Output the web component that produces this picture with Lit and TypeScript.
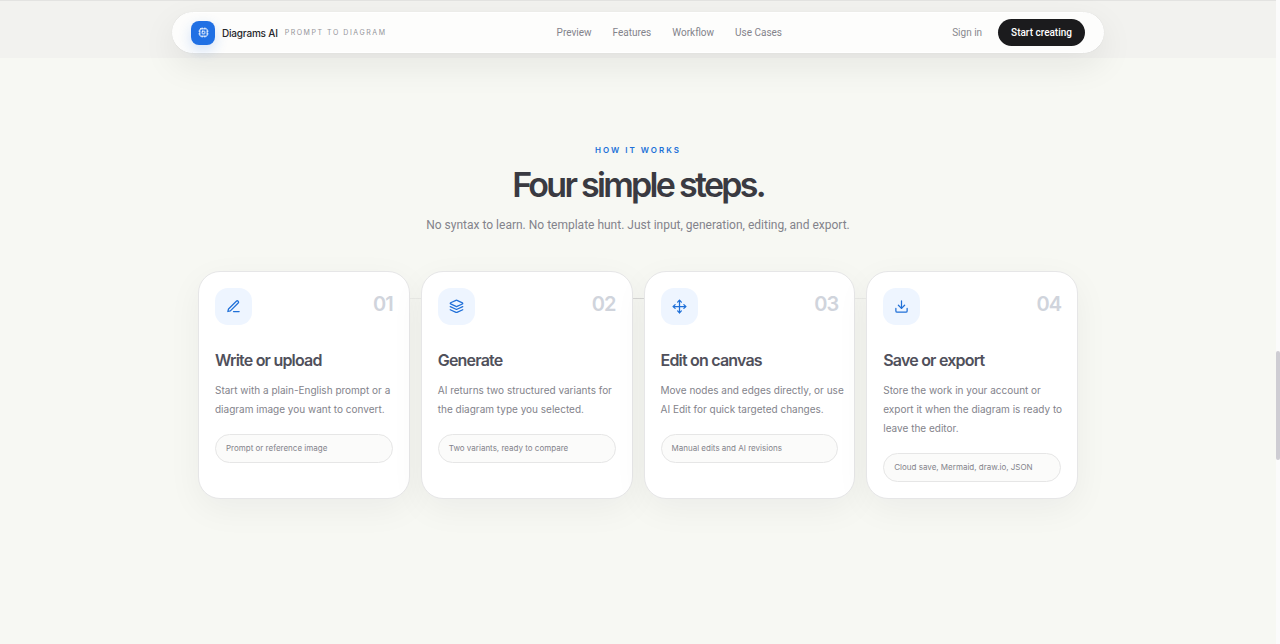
import { LitElement, html, svg, css, type SVGTemplateResult } from "lit";
import { customElement, property } from "lit/decorators.js";

type IconName = "pen" | "layers" | "move" | "download" | "cpu";

const ICONS: Record<IconName, SVGTemplateResult> = {
  pen: svg`<path d="M12 20h9"/><path d="M16.5 3.5a2.12 2.12 0 0 1 3 3L7 19l-4 1 1-4Z"/>`,
  layers: svg`<path d="m12.83 2.18a2 2 0 0 0-1.66 0L2.6 6.08a1 1 0 0 0 0 1.83l8.58 3.91a2 2 0 0 0 1.66 0l8.58-3.9a1 1 0 0 0 0-1.83Z"/><path d="m22 12.18-9.17 4.16a2 2 0 0 1-1.66 0L2 12.18"/><path d="m22 17.18-9.17 4.16a2 2 0 0 1-1.66 0L2 17.18"/>`,
  move: svg`<path d="M12 2v20M2 12h20"/><path d="m5 9-3 3 3 3"/><path d="m9 5 3-3 3 3"/><path d="m15 19-3 3-3-3"/><path d="m19 9 3 3-3 3"/>`,
  download: svg`<path d="M21 15v4a2 2 0 0 1-2 2H5a2 2 0 0 1-2-2v-4"/><path d="m7 10 5 5 5-5"/><path d="M12 15V3"/>`,
  cpu: svg`<rect x="4" y="4" width="16" height="16" rx="2"/><rect x="9" y="9" width="6" height="6" rx="1"/><path d="M15 2v2M15 20v2M2 15h2M2 9h2M20 15h2M20 9h2M9 2v2M9 20v2"/>`,
};

const icon = (name: IconName) => html`
  <svg class="icon" viewBox="0 0 24 24" aria-hidden="true">${ICONS[name]}</svg>
`;

const STEPS: { icon: IconName; title: string; text: string; note: string }[] = [
  {
    icon: "pen",
    title: "Write or upload",
    text: "Start with a plain-English prompt or a diagram image you want to convert.",
    note: "Prompt or reference image",
  },
  {
    icon: "layers",
    title: "Generate",
    text: "AI returns two structured variants for the diagram type you selected.",
    note: "Two variants, ready to compare",
  },
  {
    icon: "move",
    title: "Edit on canvas",
    text: "Move nodes and edges directly, or use AI Edit for quick targeted changes.",
    note: "Manual edits and AI revisions",
  },
  {
    icon: "download",
    title: "Save or export",
    text: "Store the work in your account or export it when the diagram is ready to leave the editor.",
    note: "Cloud save, Mermaid, draw.io, JSON",
  },
];

@customElement("site-header")
export class SiteHeader extends LitElement {
  static styles = css`
    :host {
      display: block;
      padding: 11px 24px 5px;
      background: #f2f2ef;
      border-top: 1px solid #e3e3e1;
    }
    .bar {
      display: flex;
      justify-content: space-between;
      align-items: center;
      box-sizing: border-box;
      max-width: 932px;
      margin: 0 auto;
      padding: 6px 18px;
      border: 1px solid #ffffff;
      border-radius: 24px;
      background: #fdfdfc;
      box-shadow: 0 0 1px rgba(0, 0, 0, 0.1), 0 12px 34px rgba(20, 20, 30, 0.08);
    }
    a {
      color: inherit;
      text-decoration: none;
    }
    .brand {
      display: flex;
      align-items: center;
      gap: 7px;
      white-space: nowrap;
    }
    .logo {
      display: grid;
      place-items: center;
      width: 24px;
      height: 24px;
      border-radius: 8px;
      background: #2070e4;
      color: #ffffff;
      box-shadow: 0 5px 14px rgba(32, 112, 228, 0.2);
    }
    .icon {
      width: 11px;
      height: 11px;
      fill: none;
      stroke: currentColor;
      stroke-width: 2;
      stroke-linecap: round;
      stroke-linejoin: round;
    }
    .name {
      font-size: 10px;
      line-height: 16px;
      font-weight: 500;
      letter-spacing: -0.02em;
      color: #26262b;
    }
    .tag {
      font-size: 7px;
      line-height: 12px;
      letter-spacing: 0.22em;
      color: #94949a;
    }
    .links {
      display: flex;
      gap: 21px;
      font-family: Roboto, Inter, sans-serif;
      font-size: 10px;
      line-height: 18px;
      color: #83838b;
    }
    .actions {
      display: flex;
      align-items: center;
      gap: 16px;
      font-family: Roboto, Inter, sans-serif;
      font-size: 10px;
      line-height: 18px;
      color: #88888e;
    }
    .start {
      height: 27px;
      padding: 0 13px;
      border: 0;
      border-radius: 14px;
      background: #1b1b1d;
      color: #ffffff;
      font: inherit;
      font-weight: 500;
    }
  `;

  render() {
    return html`
      <header class="bar">
        <a class="brand" href="#home">
          <span class="logo">${icon("cpu")}</span>
          <span class="name">Diagrams AI</span>
          <span class="tag">PROMPT TO DIAGRAM</span>
        </a>
        <nav class="links" aria-label="Main">
          <a href="#preview">Preview</a>
          <a href="#features">Features</a>
          <a href="#workflow">Workflow</a>
          <a href="#use-cases">Use Cases</a>
        </nav>
        <div class="actions">
          <a href="#sign-in">Sign in</a>
          <button class="start" type="button">Start creating</button>
        </div>
      </header>
    `;
  }
}

@customElement("step-card")
export class StepCard extends LitElement {
  @property({ type: Number }) index = 0;

  static styles = css`
    :host {
      display: block;
      padding: 16px;
      border: 1px solid #e6e6e7;
      border-radius: 22px;
      background: #ffffff;
      box-shadow: 0 10px 34px rgba(20, 20, 30, 0.05);
    }
    .top {
      display: flex;
      justify-content: space-between;
      align-items: flex-start;
    }
    .badge {
      display: grid;
      place-items: center;
      width: 37px;
      height: 37px;
      border-radius: 13px;
      background: #eef5ff;
      color: #2070d8;
    }
    .icon {
      width: 15px;
      height: 15px;
      fill: none;
      stroke: currentColor;
      stroke-width: 2;
      stroke-linecap: round;
      stroke-linejoin: round;
    }
    .number {
      font-size: 20px;
      line-height: 32px;
      font-weight: 600;
      letter-spacing: -0.05em;
      color: #d0d4dc;
    }
    .title {
      margin: 24px 0 0;
      font-size: 16px;
      line-height: 22px;
      font-weight: 600;
      letter-spacing: -0.05em;
      color: #50505b;
    }
    .text {
      margin: 10px -8px 0 0;
      font-size: 10px;
      line-height: 19px;
      color: #83838b;
    }
    .note {
      margin: 15px 0 0;
      padding: 7px 10px;
      border: 1px solid #e6e6e6;
      border-radius: 15px;
      background: #fbfbfa;
      font-size: 8px;
      line-height: 13px;
      color: #83838b;
    }
  `;

  render() {
    const step = STEPS[this.index];
    return html`
      <div class="top">
        <span class="badge">${icon(step.icon)}</span>
        <span class="number">0${this.index + 1}</span>
      </div>
      <h3 class="title">${step.title}</h3>
      <p class="text">${step.text}</p>
      <p class="note">${step.note}</p>
    `;
  }
}

@customElement("app-root")
export class AppRoot extends LitElement {
  static styles = css`
    :host {
      display: grid;
      grid-template-columns: minmax(0, 1fr) 4px;
      min-height: 100vh;
      background: #f7f8f3;
      font-family: Inter, "Liberation Sans", sans-serif;
      line-height: 1.5;
    }
    .how {
      padding: 85px 24px 72px;
      text-align: center;
    }
    .eyebrow {
      margin: 0;
      font-size: 8px;
      line-height: 14px;
      font-weight: 600;
      letter-spacing: 0.25em;
      color: #2070d8;
    }
    .heading {
      margin: 7px 0 0;
      font-size: 34px;
      line-height: 42px;
      font-weight: 600;
      letter-spacing: -0.08em;
      color: #3a3a41;
    }
    .lead {
      margin: 9px 0 0;
      font-family: Roboto, Inter, sans-serif;
      font-size: 12px;
      line-height: 20px;
      color: #83838b;
    }
    .steps {
      display: grid;
      grid-template-columns: repeat(4, minmax(0, 1fr));
      gap: 11px;
      max-width: 880px;
      margin: 36px auto 0;
      text-align: left;
      background: linear-gradient(90deg, transparent 10%, #d8d8d6 50%, transparent 90%)
        0 27px / 100% 1px no-repeat;
    }
    .track {
      display: grid;
      grid-template-rows: 351fr 109fr 184fr;
      background: #fbfbfb;
    }
    .thumb {
      grid-row: 2;
      border-radius: 2px;
      background: #cecdd3;
    }
  `;

  render() {
    return html`
      <div>
        <site-header></site-header>
        <main class="how">
          <p class="eyebrow">HOW IT WORKS</p>
          <h2 class="heading">Four simple steps.</h2>
          <p class="lead">
            No syntax to learn. No template hunt. Just input, generation, editing, and export.
          </p>
          <section class="steps" aria-label="Steps">
            ${STEPS.map((_, i) => html`<step-card .index=${i}></step-card>`)}
          </section>
        </main>
      </div>
      <div class="track" aria-hidden="true"><div class="thumb"></div></div>
    `;
  }
}
